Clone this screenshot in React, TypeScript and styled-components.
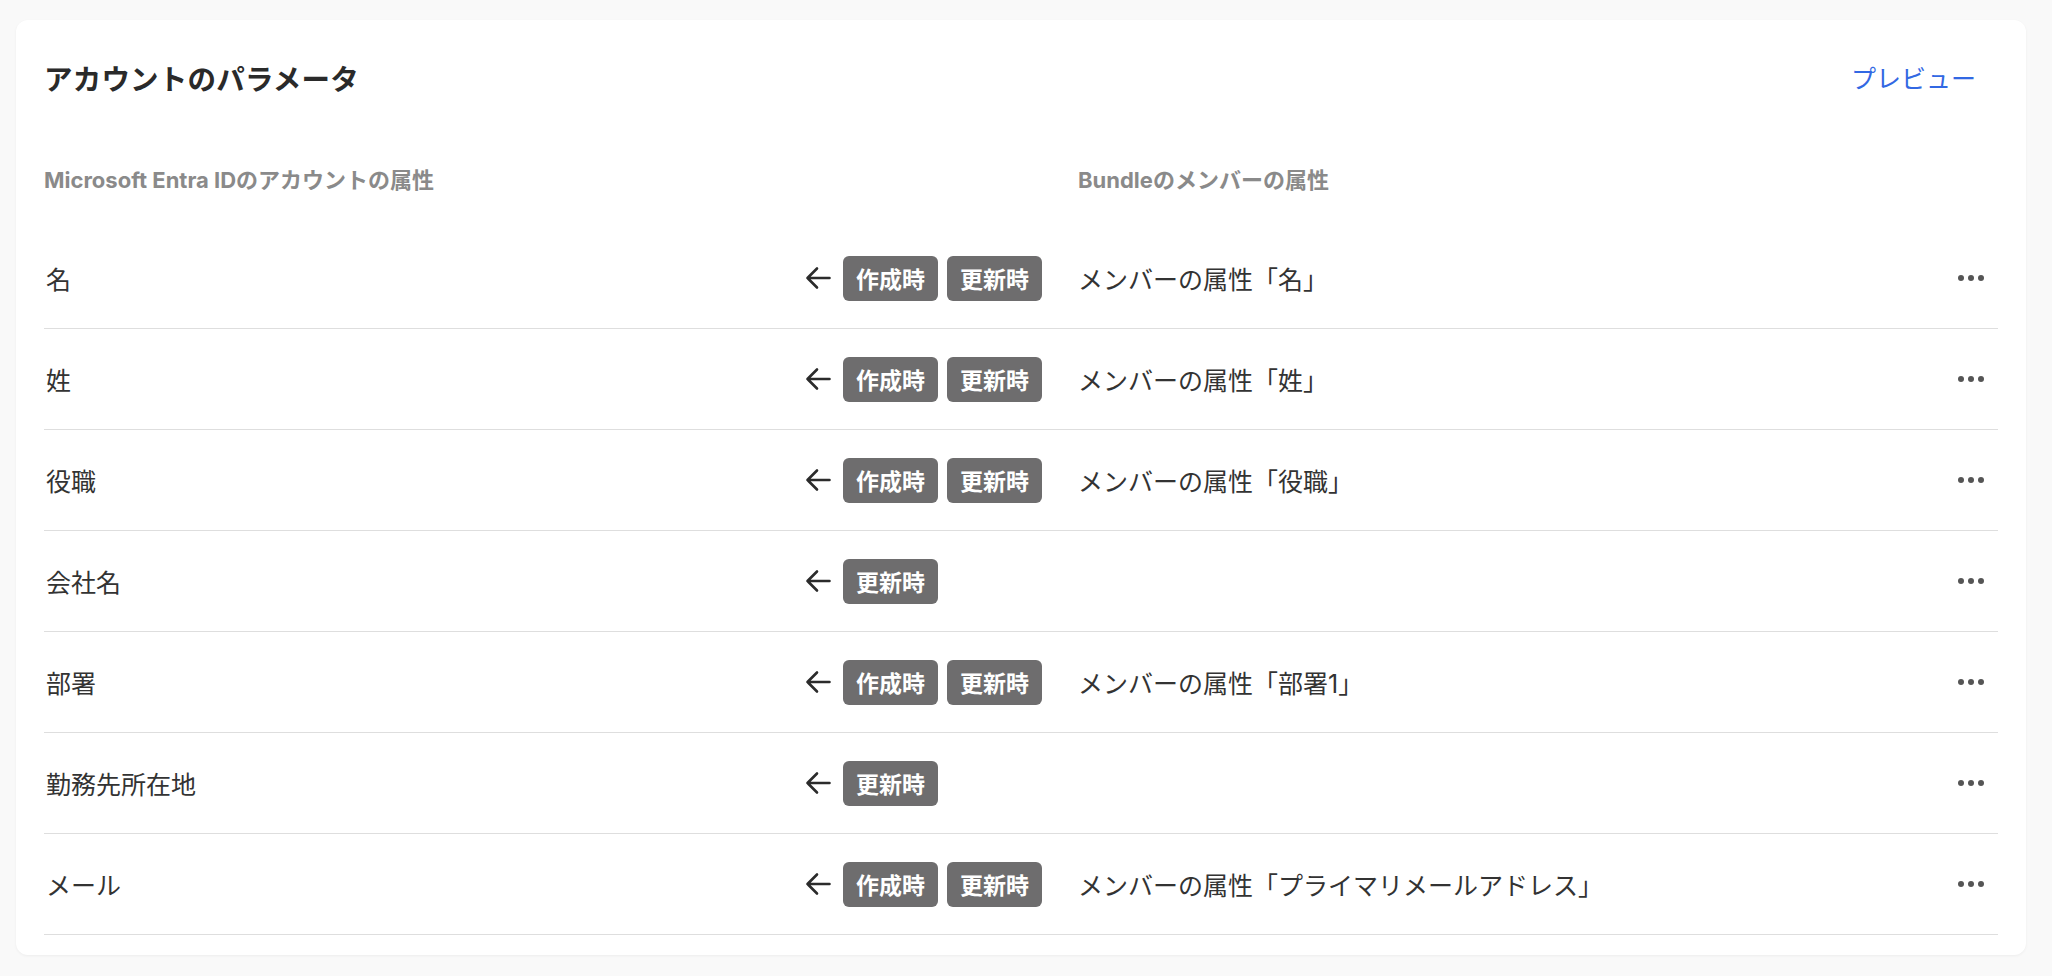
import React from 'react';
import styled, { createGlobalStyle } from 'styled-components';

type Mapping = {
  source: string;
  onCreate: boolean;
  target?: string;
};

const MAPPINGS: Mapping[] = [
  { source: '名', onCreate: true, target: 'メンバーの属性「名」' },
  { source: '姓', onCreate: true, target: 'メンバーの属性「姓」' },
  { source: '役職', onCreate: true, target: 'メンバーの属性「役職」' },
  { source: '会社名', onCreate: false },
  { source: '部署', onCreate: true, target: 'メンバーの属性「部署1」' },
  { source: '勤務先所在地', onCreate: false },
  { source: 'メール', onCreate: true, target: 'メンバーの属性「プライマリメールアドレス」' },
];

const GlobalStyle = createGlobalStyle`
  * {
    box-sizing: border-box;
  }

  body {
    margin: 0;
    background: #f9f9f9;
    font-family: Inter, "Noto Sans CJK JP", sans-serif;
    color: #333333;
  }
`;

const ArrowIcon = () => (
  <ArrowSvg width="26" height="24" viewBox="0 0 26 24" fill="none">
    <path
      d="M24.5 12H2.5M12 2.5L2.5 12L12 21.5"
      stroke="#2b2b2b"
      strokeWidth="2.6"
      strokeLinecap="round"
      strokeLinejoin="round"
    />
  </ArrowSvg>
);

const App = () => {
  return (
    <Page>
      <GlobalStyle />
      <Card>
        <TopBar>
          <Title>アカウントのパラメータ</Title>
          <PreviewButton type="button">プレビュー</PreviewButton>
        </TopBar>

        <ColumnHeader>
          <HeaderLabel>Microsoft Entra IDのアカウントの属性</HeaderLabel>
          <HeaderLabel>Bundleのメンバーの属性</HeaderLabel>
        </ColumnHeader>

        {MAPPINGS.map((m) => (
          <Row key={m.source}>
            <SourceCell>
              <SourceName>{m.source}</SourceName>
              <Sync>
                <ArrowIcon />
                <Badges>
                  {m.onCreate && <Badge>作成時</Badge>}
                  <Badge>更新時</Badge>
                </Badges>
              </Sync>
            </SourceCell>
            <TargetCell>
              <TargetName>{m.target}</TargetName>
              <MoreButton type="button" aria-label="その他">
                <Dot />
                <Dot />
                <Dot />
              </MoreButton>
            </TargetCell>
          </Row>
        ))}
      </Card>
    </Page>
  );
};

const Page = styled.div`
  padding: 20px 26px 21px 16px;
`;

const Card = styled.section`
  background: #ffffff;
  border-radius: 12px;
  box-shadow: 0 1px 3px rgba(0, 0, 0, 0.05);
  padding: 30px 28px 20px;
`;

const TopBar = styled.div`
  display: flex;
  align-items: center;
  justify-content: space-between;
  height: 54px;
`;

const Title = styled.h1`
  margin: 0;
  font-size: 28.5px;
  font-weight: 700;
  color: #2a2a2a;
  letter-spacing: 0.2px;
`;

const PreviewButton = styled.button`
  border: none;
  background: none;
  padding: 0 22px 0 0;
  font-family: inherit;
  font-size: 25px;
  color: #3268e3;
  cursor: pointer;
`;

const RowGrid = styled.div`
  display: grid;
  grid-template-columns: 1fr 920px;
  column-gap: 36px;
  align-items: center;
`;

const ColumnHeader = styled(RowGrid)`
  margin-top: 24px;
  height: 100px;
`;

const HeaderLabel = styled.div`
  font-size: 22px;
  font-weight: 700;
  color: #8a8a8a;
`;

const Row = styled(RowGrid)`
  height: 101px;
  border-bottom: 1px solid #dedede;
`;

const SourceCell = styled.div`
  display: flex;
  align-items: center;
`;

const SourceName = styled.div`
  flex: 1;
  font-size: 25px;
  color: #333333;
  padding-left: 2px;
`;

const Sync = styled.div`
  display: flex;
  align-items: center;
  gap: 12px;
  width: 237px;
  flex-shrink: 0;
`;

const ArrowSvg = styled.svg`
  flex-shrink: 0;
`;

const Badges = styled.div`
  display: flex;
  gap: 9px;
  flex-shrink: 0;
`;

const Badge = styled.span`
  display: inline-flex;
  align-items: center;
  height: 45px;
  padding: 0 13px;
  border-radius: 6px;
  background: #6e6d6e;
  color: #ffffff;
  font-size: 23px;
  font-weight: 600;
  white-space: nowrap;
`;

const TargetCell = styled.div`
  display: flex;
  align-items: center;
`;

const TargetName = styled.div`
  flex: 1;
  font-size: 25px;
  color: #333333;
`;

const MoreButton = styled.button`
  display: flex;
  align-items: center;
  justify-content: center;
  gap: 4px;
  width: 54px;
  height: 40px;
  border: none;
  background: none;
  padding: 0;
  cursor: pointer;
`;

const Dot = styled.span`
  width: 6px;
  height: 6px;
  border-radius: 50%;
  background: #555555;
`;

export default App;
